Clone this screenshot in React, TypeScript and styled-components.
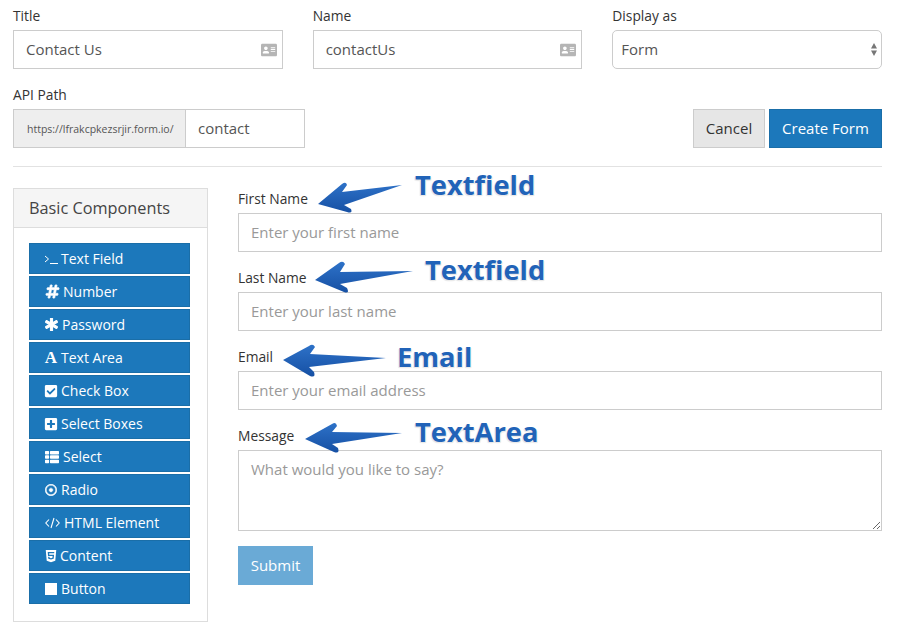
import React from 'react'
import styled, { createGlobalStyle } from 'styled-components'
import {
  FaAddressCard,
  FaAsterisk,
  FaCheckSquare,
  FaHashtag,
  FaHtml5,
  FaPlusSquare,
  FaRegDotCircle,
  FaThList,
} from 'react-icons/fa'

const GlobalStyle = createGlobalStyle`
  html, body {
    margin: 0;
    background: #fff;
    font-family: "Open Sans", "Noto Sans", sans-serif;
    font-size: 14px;
    color: #333;
  }
  * { box-sizing: border-box; }
`

const Page = styled.div`
  position: relative;
  width: 898px;
  height: 625px;
  overflow: hidden;
  padding: 8px 16px 0 13px;
`

const TopRow = styled.div`
  display: grid;
  grid-template-columns: repeat(3, 1fr);
  column-gap: 30px;
`

const Label = styled.label`
  display: block;
  height: 22px;
  line-height: 15px;
  font-size: 13.8px;
  color: #333;
`

const FieldWrap = styled.div`
  position: relative;
`

const TextInput = styled.input`
  display: block;
  width: 100%;
  min-width: 0;
  height: 39px;
  padding: 0 12px 2px;
  border: 1px solid #ccc;
  border-radius: 0;
  background: #fff;
  outline: none;
  font: 15px "Open Sans", sans-serif;
  color: #555;
  &::placeholder { color: #999; opacity: 1; }
`

const CardIcon = styled(FaAddressCard)`
  position: absolute;
  right: 6px;
  top: 12px;
  width: 16px;
  height: 16px;
  color: #b5b5b5;
`

const SelectBox = styled.select`
  display: block;
  width: 100%;
  height: 39px;
  padding: 0 8px 2px;
  appearance: none;
  border: 1px solid #ccc;
  border-radius: 5px;
  background: #fff;
  outline: none;
  font: 15px "Open Sans", sans-serif;
  color: #555;
`

const Updown = styled.svg`
  position: absolute;
  right: 5px;
  top: 13px;
  width: 6px;
  height: 13px;
  pointer-events: none;
`

const ApiRow = styled.div`
  display: flex;
  justify-content: space-between;
  align-items: flex-end;
  margin-top: 18px;
`

const InputGroup = styled.div`
  display: flex;
  width: 292px;
`

const Addon = styled.span`
  display: flex;
  align-items: center;
  flex: 0 0 172px;
  height: 39px;
  padding-left: 13px;
  background: #eee;
  border: 1px solid #ccc;
  border-right: 0;
  font-size: 10.5px;
  color: #555;
  white-space: nowrap;
`

const GroupInput = styled(TextInput)`
  flex: 1;
  width: auto;
`

const Actions = styled.div`
  display: flex;
  gap: 4px;
`

const ActionButton = styled.button<{ $primary?: boolean }>`
  height: 39px;
  padding: 0 0 2px;
  width: ${(p) => (p.$primary ? '113px' : '72px')};
  border: 1px solid ${(p) => (p.$primary ? '#1a6ea8' : '#ccc')};
  background: ${(p) => (p.$primary ? '#1c78bb' : '#e6e6e6')};
  color: ${(p) => (p.$primary ? '#fff' : '#333')};
  font: 15px "Open Sans", sans-serif;
`

const Rule = styled.hr`
  height: 1px;
  margin: 18px 0 21px;
  border: 0;
  background: #e2e2e2;
`

const Builder = styled.div`
  display: flex;
  gap: 30px;
  align-items: flex-start;
`

const Panel = styled.aside`
  width: 195px;
  height: 434px;
  flex-shrink: 0;
  border: 1px solid #ddd;
`

const PanelHeader = styled.div`
  height: 39px;
  padding-left: 15px;
  line-height: 39px;
  background: #f5f5f5;
  border-bottom: 1px solid #ddd;
  font-size: 16.3px;
  color: #444;
`

const PanelBody = styled.div`
  display: flex;
  flex-direction: column;
  gap: 2px;
  padding: 15px 17px 0 15px;
`

const ComponentButton = styled.div`
  display: flex;
  align-items: center;
  gap: 4px;
  height: 31px;
  padding-left: 15px;
  background: #1c78bb;
  border: 1px solid #1a6ea8;
  color: #fff;
  font-size: 14px;
  white-space: nowrap;
`

const IconSlot = styled.span<{ $w: number }>`
  display: flex;
  flex: 0 0 ${(p) => p.$w}px;
  width: ${(p) => p.$w}px;
  justify-content: center;
  align-items: center;
  svg { flex-shrink: 0; }
`

const SerifGlyph = styled.span`
  font: bold 17px "Liberation Serif", serif;
  line-height: 1;
`

const StopSquare = styled.span`
  flex-shrink: 0;
  width: 12px;
  height: 12px;
  background: #fff;
`

const FormArea = styled.div`
  flex: 1;
  position: relative;
`

const FormField = styled.div`
  position: relative;
  margin-bottom: 15px;
`

const FormLabel = styled(Label)`
  height: 25px;
  padding-top: 3px;
`

const TextAreaInput = styled.textarea`
  display: block;
  width: 100%;
  height: 81px;
  padding: 8px 12px;
  border: 1px solid #ccc;
  border-radius: 0;
  outline: none;
  font: 15px "Open Sans", sans-serif;
  color: #555;
  &::placeholder { color: #999; opacity: 1; }
`

const SubmitButton = styled.button`
  display: block;
  width: 75px;
  height: 39px;
  padding: 0 0 2px;
  background: #6aaad6;
  border: 1px solid #6aaad6;
  color: #fff;
  font: 15px "Open Sans", sans-serif;
`

const CalloutText = styled.span<{ $x: number; $y: number }>`
  position: absolute;
  left: ${(p) => p.$x}px;
  top: ${(p) => p.$y}px;
  font: bold 27.3px/34px "Open Sans", sans-serif;
  color: #2163b8;
  text-shadow: 0 0 2px #fff, 0 1px 1px #e4e4e4, 1px 1px 1px #e4e4e4, -1px 1px 1px #e4e4e4;
  white-space: nowrap;
`

const CalloutArrow = styled.svg`
  position: absolute;
  left: 0;
  top: 0;
  width: 898px;
  height: 625px;
  pointer-events: none;
`

const TerminalIcon = () => (
  <svg width="12" height="12" viewBox="0 0 12 12" fill="none" stroke="#fff" strokeWidth="1" overflow="visible">
    <path d="M0 3l3.5 3L0 9" />
    <path d="M5 10.5H13" />
  </svg>
)

const CodeIcon = () => (
  <svg width="15" height="12" viewBox="0 0 15 12" fill="none" stroke="#fff" strokeWidth="1.1">
    <path d="M4 2.5L.8 6 4 9.5M11 2.5L14.2 6 11 9.5M9 1L6 11" />
  </svg>
)

const components: { icon: React.ReactNode; width: number; label: string }[] = [
  { icon: <TerminalIcon />, width: 12, label: 'Text Field' },
  { icon: <FaHashtag size={15} stroke="currentColor" strokeWidth={28} />, width: 14, label: 'Number' },
  { icon: <FaAsterisk size={13} stroke="currentColor" strokeWidth={40} />, width: 13, label: 'Password' },
  { icon: <SerifGlyph>A</SerifGlyph>, width: 12, label: 'Text Area' },
  { icon: <FaCheckSquare size={14} />, width: 12, label: 'Check Box' },
  { icon: <FaPlusSquare size={14} />, width: 12, label: 'Select Boxes' },
  { icon: <FaThList size={14} />, width: 14, label: 'Select' },
  { icon: <FaRegDotCircle size={12} stroke="currentColor" strokeWidth={20} />, width: 12, label: 'Radio' },
  { icon: <CodeIcon />, width: 15, label: 'HTML Element' },
  { icon: <FaHtml5 size={14} />, width: 11, label: 'Content' },
  { icon: <StopSquare />, width: 12, label: 'Button' },
]

const fields = [
  { label: 'First Name', placeholder: 'Enter your first name' },
  { label: 'Last Name', placeholder: 'Enter your last name' },
  { label: 'Email', placeholder: 'Enter your email address' },
]

const arrows = [
  'M318 204 L342 184 Q346 181 347 185 L342 192 L402 185 L344 205 L351 209 Q353 214 347 212 Z',
  'M315 280 L339 263 Q343 260 345 264 L340 272 L413 271 L340 284 L347 288 Q350 294 344 292 Z',
  'M283 360 L309 346 Q313 343 315 347 L310 354 L386 358 L309 367 L314 372 Q316 378 310 376 Z',
  'M305 439 L332 424 Q336 421 337 426 L332 432 L402 433 L332 444 L338 448 Q340 454 334 452 Z',
]

const callouts = [
  { text: 'Textfield', x: 415, y: 168 },
  { text: 'Textfield', x: 425, y: 253 },
  { text: 'Email', x: 397, y: 340 },
  { text: 'TextArea', x: 415, y: 415 },
]

const App: React.FC = () => {
  return (
    <Page>
      <GlobalStyle />
      <TopRow>
        <div>
          <Label>Title</Label>
          <FieldWrap>
            <TextInput defaultValue="Contact Us" />
            <CardIcon />
          </FieldWrap>
        </div>
        <div>
          <Label>Name</Label>
          <FieldWrap>
            <TextInput defaultValue="contactUs" />
            <CardIcon />
          </FieldWrap>
        </div>
        <div>
          <Label>Display as</Label>
          <FieldWrap>
            <SelectBox defaultValue="Form">
              <option>Form</option>
            </SelectBox>
            <Updown viewBox="0 0 6 13">
              <path d="M3 0l3 5.5H0zM3 13L0 7.5h6z" fill="#777" />
            </Updown>
          </FieldWrap>
        </div>
      </TopRow>

      <ApiRow>
        <div>
          <Label>API Path</Label>
          <InputGroup>
            <Addon>https://lfrakcpkezsrjir.form.io/</Addon>
            <GroupInput defaultValue="contact" />
          </InputGroup>
        </div>
        <Actions>
          <ActionButton>Cancel</ActionButton>
          <ActionButton $primary>Create Form</ActionButton>
        </Actions>
      </ApiRow>

      <Rule />

      <Builder>
        <Panel>
          <PanelHeader>Basic Components</PanelHeader>
          <PanelBody>
            {components.map((c) => (
              <ComponentButton key={c.label}>
                <IconSlot $w={c.width}>{c.icon}</IconSlot>
                {c.label}
              </ComponentButton>
            ))}
          </PanelBody>
        </Panel>
        <FormArea>
          {fields.map((f) => (
            <FormField key={f.label}>
              <FormLabel>{f.label}</FormLabel>
              <TextInput placeholder={f.placeholder} />
            </FormField>
          ))}
          <FormField>
            <FormLabel>Message</FormLabel>
            <TextAreaInput placeholder="What would you like to say?" />
          </FormField>
          <SubmitButton>Submit</SubmitButton>
        </FormArea>
      </Builder>

      <CalloutArrow viewBox="0 0 898 625">
        <defs>
          <linearGradient id="arrowFill" x1="0" y1="0" x2="0" y2="1">
            <stop offset="0" stopColor="#2e72c8" />
            <stop offset="1" stopColor="#1650a4" />
          </linearGradient>
        </defs>
        {arrows.map((d) => (
          <path key={d} d={d} fill="url(#arrowFill)" />
        ))}
      </CalloutArrow>
      {callouts.map((c) => (
        <CalloutText key={c.y} $x={c.x} $y={c.y}>
          {c.text}
        </CalloutText>
      ))}
    </Page>
  )
}

export default App
